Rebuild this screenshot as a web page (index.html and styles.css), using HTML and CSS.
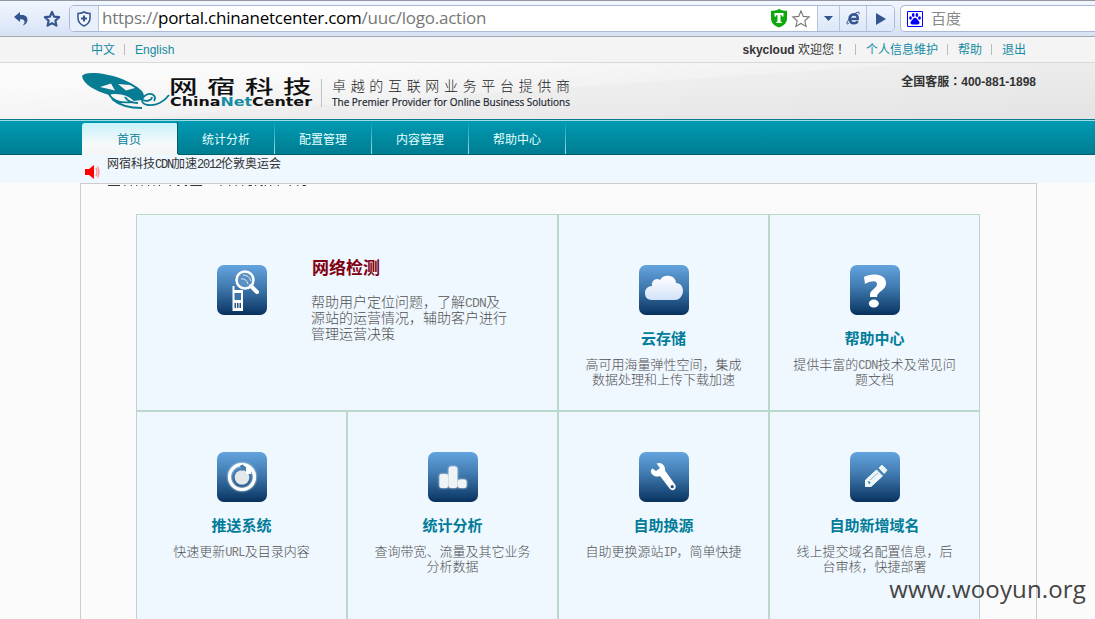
FILE: index.html
```html
<!DOCTYPE html>
<html lang="zh-CN">
<head>
<meta charset="utf-8">
<title>网宿科技</title>
<link rel="stylesheet" href="styles.css">
</head>
<body>
<svg class="defs" width="0" height="0">
  <defs>
    <linearGradient id="tile" x1="0" y1="0" x2="0" y2="1"><stop offset="0" stop-color="#64a4df"/><stop offset=".45" stop-color="#3f79ae"/><stop offset=".9" stop-color="#12406f"/><stop offset="1" stop-color="#08305a"/></linearGradient>
    <linearGradient id="cloud" x1="0" y1="0" x2="0" y2="1"><stop offset="0" stop-color="#fff"/><stop offset="1" stop-color="#d3e2fa"/></linearGradient>
    <filter id="glow" x="-30%" y="-30%" width="160%" height="160%"><feGaussianBlur stdDeviation="1.3" result="b"/><feMerge><feMergeNode in="b"/><feMergeNode in="SourceGraphic"/></feMerge></filter>
  </defs>
</svg>
<div class="browser">
  <svg class="back" width="16" height="16" viewBox="0 0 16 16"><path d="M1 6 7 1v3h2c4 0 5.500 2.500 5.500 5s-2 5-5 5.500c1.500-1.200 2.300-2.500 2-4C11.200 9 10 8.300 8.500 8.300H7V11z" fill="#35558f"/></svg>
  <svg class="fav" width="18" height="18" viewBox="0 0 18 18"><path d="m9 2 2.100 4.600 5 .6-3.700 3.400 1 5L9 13.100l-4.400 2.500 1-5L1.900 7.200l5-.6z" fill="none" stroke="#35558f" stroke-width="2.200" stroke-linejoin="round"/></svg>
  <div class="address">
    <span class="shield"><svg width="16" height="16" viewBox="0 0 16 16"><path d="M8 1c2 1.300 4 1.600 6 1.600V7c0 4-2.500 6.500-6 8-3.500-1.500-6-4-6-8V2.600C4 2.600 6 2.300 8 1z" fill="#f4f8ff" stroke="#35558f" stroke-width="1.500"/><path d="M8 4.500v6M5 7.500h6" stroke="#35558f" stroke-width="2"/></svg></span>
    <span class="url"><i>https://</i>portal.chinanetcenter.com<i>/uuc/logo.action</i></span>
    <svg class="trust" width="18" height="19" viewBox="0 0 18 19"><path d="M9 0c3 1.500 5.500 1.800 8 1.800V9c0 5-3 7.500-8 9.500C4 16.500 1 14 1 9V1.800C3.500 1.800 6 1.500 9 0z" fill="#0ca80c"/><path d="M4.500 4h9v3.500h-1.500L11.500 6h-1v6.500l1.300.5v1H6.200v-1l1.300-.5V6h-1L6 7.500H4.500z" fill="#fff"/></svg>
    <svg class="star" width="20" height="20" viewBox="0 0 20 20"><path d="m10 2 2.300 5.400 5.900.5-4.400 3.900 1.300 5.700-5.100-3-5.100 3 1.300-5.700-4.400-3.900 5.900-.5z" fill="#fff" stroke="#777" stroke-width="1.100"/></svg>
    <span class="tool t1"><svg width="9" height="5" viewBox="0 0 9 5"><path d="M0 0h9L4.500 5z" fill="#35558f"/></svg></span>
    <span class="tool t2"><svg width="15" height="15" viewBox="0 0 15 15"><path d="M3.500 8h8.200c.3-3-1.200-4.600-3.700-4.600-2.800 0-4.400 2-4.400 4.400 0 2.800 1.700 4.400 4.400 4.400 1.700 0 3-.7 3.600-2" fill="none" stroke="#35558f" stroke-width="2.600"/><path d="M3 12c-2 2-3 .8-1-2.300C4 6 8 2.500 11 1.400c2-.7 2.700 0 2 1.700" fill="none" stroke="#35558f" stroke-width="1"/></svg></span>
    <span class="tool t3"><svg width="10" height="12" viewBox="0 0 10 12"><path d="M0 0v12l10-6z" fill="#35558f"/></svg></span>
  </div>
  <div class="search">
    <svg width="16" height="16" viewBox="0 0 16 16"><path d="M.5.500h15v15H.5z" fill="#fff" stroke="#00f"/><g fill="#00f"><ellipse cx="3.500" cy="7" rx="1.400" ry="1.800"/><ellipse cx="6.200" cy="4" rx="1.300" ry="1.900"/><ellipse cx="9.900" cy="4" rx="1.300" ry="1.900"/><ellipse cx="12.500" cy="7" rx="1.400" ry="1.800"/><path d="M8 6.800c1.800 0 2.200 2 3.500 3s1.500 3.600-.7 3.600H5.200c-2.200 0-2-2.600-.7-3.600S6.200 6.800 8 6.800z"/></g></svg>
    <span>百度</span>
  </div>
</div>
<div class="links">
  <div class="lang"><a>中文</a><b></b><a>English</a></div>
  <div class="user"><span><strong>skycloud</strong> 欢迎您<em lang="zh-TW">！</em></span><b></b><a>个人信息维护</a><b></b><a>帮助</a><b></b><a>退出</a></div>
</div>
<header class="head">
  <svg class="logo" width="500" height="56" viewBox="0 0 500 56">
    <path d="M2 13q2-3 10-3c18 0 40 8 50 18q4 5 0 9l-8 1q-8-8-21-7l-4 1C15 28 3 21 2 13z" fill="#087c92"/>
    <path d="m20 24 11-3.500 4 7zm18-3 12 1 5 3-9 2.500z" fill="#f4f5f5"/>
    <path d="M29 31c4 8 12 9 24 8M32 36c8 7 19 9 30 9M45 34c3 5 8 6 13 6M74 38c3-5-2-9-8-6-6 4-5 9 2 10 8 1 16-3 21-10M63 37c4 2 9 0 9-3" fill="none" stroke="#087c92" stroke-width="1.800"/>
    <text class="zh-logo" transform="translate(89 31) scale(1.500 1)" textLength="95">网宿科技</text>
    <text class="en-logo" x="90" y="42.500" textLength="142" lengthAdjust="spacingAndGlyphs">China<tspan fill="#168ca2">Net</tspan>Center</text>
    <path d="M241.500 16v28" stroke="#c2c2c2"/>
    <text class="slogan" x="252" y="28" textLength="238">卓越的互联网业务平台提供商</text>
    <text class="premier" x="252" y="43" textLength="238" lengthAdjust="spacingAndGlyphs">The Premier Provider for Online Business Solutions</text>
  </svg>
  <strong class="phone">全国客服<em lang="zh-TW">：</em>400-881-1898</strong>
</header>
<nav class="nav"><a class="on">首页</a><a>统计分析</a><a>配置管理</a><a>内容管理</a><a>帮助中心</a></nav>
<div class="ticker">
  <svg width="16" height="16" viewBox="0 0 16 16"><path d="M0 5h4l5-4v14l-5-4H0z" fill="#f00"/><path d="M11 4q2 4 0 8M12.500 2.500q3 5.500 0 11" fill="none" stroke="#f99" stroke-width="1.500"/></svg>
  <span>网宿科技<i>CDN</i>加速<i>2012</i>伦敦奥运会</span>
</div>
<main class="panel">
  <svg class="cut" width="227" height="3" viewBox="0 0 210 3" preserveAspectRatio="none"><path d="M1 1.500h11m4 0h1m5 0h1m4 0h1m4 0h1m5 0h1m4 0h1m4 0h1m9 0h1m6 0h2m5 0h2m3 0h11m17 0h1m7 0h1m5 0h1m5 0h1m5 0h3m3 0h1m4 0h2m2 0h1m4 0h1m6 0h1m10 0h1m6 0h1m4 0h3" stroke="#333"/></svg>
  <div class="grid">
    <section class="cell wide">
      <svg class="icon" viewBox="0 0 50 50"><rect width="50" height="50" rx="7" fill="url(#tile)"/><circle cx="28" cy="15" r="8.500" fill="#5b91c1" stroke="#fff" stroke-width="2.500"/><path d="m34 21 6 6" stroke="#fff" stroke-width="4" stroke-linecap="round"/><path d="M24 14q5-1 7 5m-5-9q6 0 8 6" fill="none" stroke="#dbe8f3"/><path d="M16.500 21v5m0 0h8.500v19h-8.500z" fill="#fff" stroke="#fff" stroke-width="2"/><path d="M17.500 28h6.500v7h-6.500z" fill="#3c74a8"/><path d="M17.500 38h1.500v5h-1.500zm2.500 0h1.500v5H20zm2.500 0H24v5h-1.500z" fill="#24517e"/></svg>
      <div><h2>网络检测</h2><p>帮助用户定位问题，了解<i>CDN</i>及<br>源站的运营情况，辅助客户进行<br>管理运营决策</p></div>
    </section>
    <section class="cell">
      <svg class="icon" viewBox="0 0 50 50"><rect width="50" height="50" rx="7" fill="url(#tile)"/><path d="M13 35c-5 0-7-3-7-7s3-7 7-7c-1-5 4-9 8-6 2-4 6-5 10-4 4 1 6 4 6 7 5 0 7 4 7 8s-3 9-8 9z" fill="url(#cloud)"/></svg>
      <h3>云存储</h3><p>高可用海量弹性空间，集成<br>数据处理和上传下载加速</p>
    </section>
    <section class="cell">
      <svg class="icon" viewBox="0 0 50 50"><rect width="50" height="50" rx="7" fill="url(#tile)"/><path d="M14 12c6-4 22-4 22 6 0 8-9 8-9 14h-7c-1-8 7-8 7-13 0-4-7-3-12 0z" fill="#fff"/><ellipse cx="23.800" cy="38.500" rx="5" ry="4" fill="#fff"/></svg>
      <h3>帮助中心</h3><p>提供丰富的<i>CDN</i>技术及常见问<br>题文档</p>
    </section>
    <section class="cell">
      <svg class="icon" viewBox="0 0 50 50"><rect width="50" height="50" rx="7" fill="url(#tile)"/><g filter="url(#glow)"><circle cx="25" cy="25" r="12.500" fill="none" stroke="#fff" stroke-width="3"/></g><circle cx="25" cy="25.500" r="7.300" fill="#e5e8eb"/><path d="m29 14 6 3-1 5-5 0z" fill="#fff"/><path d="m22.500 14 3-1.500 4 3.500-5 3 .5-3z" fill="#477ca9"/></svg>
      <h3>推送系统</h3><p>快速更新<i>URL</i>及目录内容</p>
    </section>
    <section class="cell">
      <svg class="icon" viewBox="0 0 50 50"><rect width="50" height="50" rx="7" fill="url(#tile)"/><g filter="url(#glow)" fill="#f0f3f6"><rect x="11.500" y="22" width="8.500" height="14" rx="2"/><rect x="20.700" y="14.500" width="8.600" height="21.500" rx="2.500"/><rect x="30" y="27.500" width="8.500" height="8.500" rx="2"/></g></svg>
      <h3>统计分析</h3><p>查询带宽、流量及其它业务<br>分析数据</p>
    </section>
    <section class="cell">
      <svg class="icon" viewBox="0 0 50 50"><rect width="50" height="50" rx="7" fill="url(#tile)"/><path d="M17.500 11.500c5-2 9 2 8.500 7l10 14c2.500 4-2 7.500-5 4.500L21 24c-5 2-10-2-9-6l1.500-1.500L17 19l4-3z" fill="#fff"/><circle cx="33.200" cy="34.700" r="1.600" fill="#274f7c"/></svg>
      <h3>自助换源</h3><p>自助更换源站<i>IP</i>，简单快捷</p>
    </section>
    <section class="cell">
      <svg class="icon" viewBox="0 0 50 50"><rect width="50" height="50" rx="7" fill="url(#tile)"/><path d="m15.500 28 11-10 6 6L21 34.500h-5.500zM29 16l3-2.800 5 5-2.800 3.300z" fill="#edf7f8" stroke="#edf7f8" stroke-linejoin="round"/><path d="m20 28 8-7" stroke="#8bb4cf"/><path d="m17.500 29 3 1-1 2.500z" fill="#3975a6"/></svg>
      <h3>自助新增域名</h3><p>线上提交域名配置信息，后<br>台审核，快捷部署</p>
    </section>
  </div>
</main>
<div class="mark">www.wooyun.org</div>
</body>
</html>
```
FILE: styles.css
```css
* { box-sizing: border-box; }
body { margin: 0; height: 619px; overflow: hidden; position: relative; background: #fbfbfb; font: 12px/16px "Liberation Sans", "Noto Sans CJK SC", sans-serif; color: #333; }
i, em { font-style: normal; }
em { font-family: "Noto Sans CJK TC", sans-serif; line-height: 0; }
.defs { position: absolute; }
.browser { height: 37px; padding: 4px 0 4px 13px; display: flex; align-items: center; background: linear-gradient(#f1f6ff, #e2ebfa 60%, #d5e2f5); border-top: 1px solid #9297a0; border-bottom: 1px solid #a5a8ae; }
.fav { margin: 0 9px 0 14px; }
.address { width: 826px; height: 27px; display: flex; align-items: center; background: #fff; border: 1px solid #adb9d3; border-radius: 5px; overflow: hidden; flex: none; margin-left: -1px; }
.shield { width: 29px; height: 100%; display: flex; align-items: center; justify-content: center; background: #e8f0fc; border-right: 1px solid #b8c4dc; }
.url { font: 17px/24px "Open Sans", "Noto Sans", sans-serif; color: #000; letter-spacing: -.25px; padding: 0 0 2px 3px; width: 671px; white-space: nowrap; }
.url i { color: #777; }
.star { margin: 0 6px 0 3px; }
.tool { height: 100%; flex: 1 0 21px; display: flex; align-items: center; justify-content: center; background: linear-gradient(#eff5ff, #dce7f8); border-left: 1px solid #b8c4dc; }
.t2, .t3 { flex-basis: 27px; }
.search { height: 27px; flex: 1; margin-left: 5px; padding-left: 6px; display: flex; align-items: center; gap: 8px; background: #fff; border: 1px solid #adb9d3; border-right: 0; border-radius: 5px 0 0 5px; font: 15px/20px "Noto Sans CJK SC", sans-serif; color: #888; }
.search span { padding-bottom: 2px; }
.links { height: 26px; padding: 0 69px 0 91px; display: flex; align-items: center; justify-content: space-between; background: #f4f4f4; border-bottom: 1px solid #d9d9d9; }
.links div { display: flex; align-items: center; }
.links a { color: #138ba3; }
.links b { width: 1px; height: 11px; margin: 0 10px 0 9px; background: #bbb; }
.head { height: 56px; padding: 0 59px 0 80px; display: flex; justify-content: space-between; background: linear-gradient(176deg, #fafafa 0 20%, #f2f2f2 48%, #eee 49%, #e3e3e3); }
.phone { padding-top: 11px; }
.zh-logo { font: 500 19px "Noto Sans CJK SC", sans-serif; fill: #111; }
.en-logo { font: bold 13px "DejaVu Sans", sans-serif; fill: #111; }
.slogan { font: 300 14px "Noto Sans CJK SC", sans-serif; fill: #222; }
.premier { font: 11px "Open Sans", "Noto Sans", sans-serif; fill: #17232d; stroke: #17232d; stroke-width: .2px; }
.nav { height: 36px; padding: 3px 0 0 81px; display: flex; background: linear-gradient(#087c8f 0 1px, #9edbe5 1px 2px, #009ab3 2px, #007d91 35px, #04606d 35px); }
.nav a { width: 97px; height: 32px; padding-top: 3px; display: flex; align-items: center; justify-content: center; color: #e4ffff; border-right: 1px solid; border-image: linear-gradient(#009ab3, #a7e1e8) 1; }
.nav .on { height: 32px; margin: 1px 0 0 1px; width: 96px; padding: 1px 2px 0 0; color: #087f99; background: linear-gradient(#c8f2fa, #f6f9fa 65%, #f4f5f5); border: 0; border-radius: 3px 3px 0 0; }
.nav .on + a { box-shadow: -1px 0 #075e6c; }
.ticker { height: 28px; padding: 0 85px; display: flex; gap: 6px; background: #eff7ff; }
.ticker svg { margin-top: 9px; }
.ticker span { padding-top: 1px; }
.ticker i, .cell i { font-family: "Liberation Mono", monospace; font-size: 12px; line-height: 0; letter-spacing: -.7px; }
.ticker i { letter-spacing: -1.2px; }
.cell i { color: #777; }
.panel { width: 957px; height: 440px; margin-left: 80px; border: solid #ccc; border-width: 1px 1px 0; background: #fbfbfb; display: flex; flex-direction: column; }
.cut { margin: 0 0 27px 26px; flex: none; }
.grid { width: 844px; margin-left: 55px; display: grid; grid-template-columns: repeat(4, 211px); grid-template-rows: 197px 220px; }
.cell { border: 1px solid #bcd8cd; background: #eff7ff; padding-top: 40px; display: flex; flex-direction: column; align-items: center; text-align: center; }
.cell:nth-child(-n+3) { padding-top: 50px; }
.icon { width: 50px; height: 50px; flex: none; }
h2, h3, p { margin: 0; }
h3 { margin-top: 14px; font: bold 15px/20px "Liberation Sans", "Noto Sans CJK SC", sans-serif; color: #007c99; }
.cell p { margin-top: 8px; font-size: 13px; line-height: 15px; color: #505050; font-weight: 300; white-space: nowrap; }
.cell.wide { grid-column: span 2; flex-direction: row; align-items: flex-start; padding-left: 80px; text-align: left; gap: 44px; }
h2 { margin-top: -7px; padding-left: 1px; font: bold 17px/22px "Liberation Sans", "Noto Sans CJK SC", sans-serif; color: #7f0010; }
.cell.wide p { margin-top: 14px; font-size: 14px; line-height: 16px; }
.cell.wide i { font-size: 13px; letter-spacing: -.8px; }
.mark { position: absolute; right: 9px; bottom: 12px; font: 24px/36px "Open Sans", "Noto Sans", sans-serif; letter-spacing: .15px; color: #444; }
```
